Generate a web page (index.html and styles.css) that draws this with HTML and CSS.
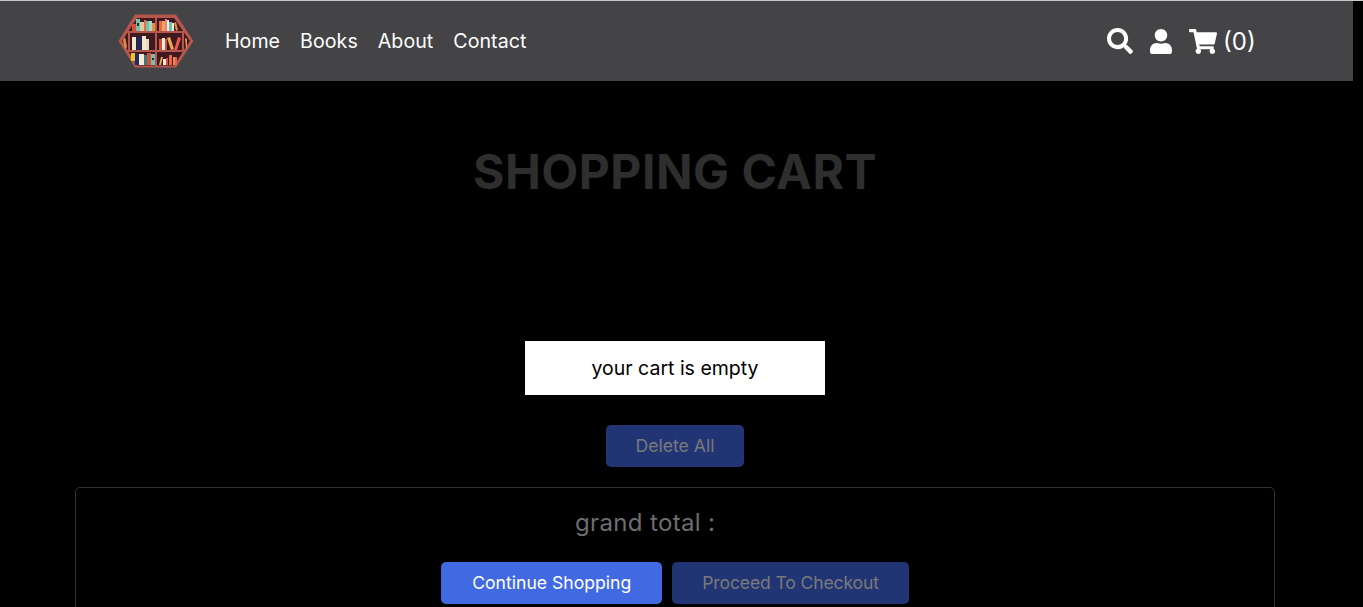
FILE: index.html
```html
<!DOCTYPE html>
<html lang="en">
<head>
<meta charset="utf-8">
<title>Shopping Cart</title>
<link rel="stylesheet" href="styles.css">
</head>
<body>
<div class="page">
  <header class="header">
    <a class="logo" href="#" aria-label="Bookshelf logo">
      <svg viewBox="0 0 76 54" width="76" height="54">
        <polygon fill="#b5574c" points="17,0.5 58,0.5 75.500,27 58,53.500 17,53.500 0.500,27"/>
        <polygon fill="#3e1a20" points="19,4 56,4 72,27 56,51.500 19,51.500 4,27"/>
        <!-- top-left shelf -->
        <rect x="14" y="10" width="4" height="7" fill="#d8503c"/>
        <rect x="18" y="5" width="4" height="12" fill="#6fc2ac"/>
        <rect x="19" y="9" width="2" height="3" fill="#2a2a2a"/>
        <rect x="22" y="8" width="4" height="9" fill="#e0c8a0"/>
        <rect x="26" y="6" width="2" height="11" fill="#e8694a"/>
        <rect x="28" y="7" width="3" height="10" fill="#6fc2ac"/>
        <rect x="31" y="7" width="3" height="10" fill="#a8d8c4"/>
        <rect x="34" y="9" width="3" height="8" fill="#e8913c"/>
        <!-- top-right shelf -->
        <rect x="41" y="7" width="3" height="10" fill="#e8694a"/>
        <rect x="44" y="7" width="3" height="10" fill="#f0a84c"/>
        <rect x="47" y="5" width="2" height="12" fill="#e0808c"/>
        <rect x="49" y="6" width="2" height="11" fill="#f4ece0"/>
        <rect x="51" y="8" width="3" height="9" fill="#6fc2ac"/>
        <rect x="54" y="9" width="2" height="8" fill="#f4ece0"/>
        <polygon fill="#e8913c" points="56,9 58,8 60,16 58,17"/>
        <!-- middle shelf -->
        <polygon fill="#e8913c" points="5,26 7,23 9,33 7,35"/>
        <rect x="14" y="23" width="4" height="13" fill="#f0e6d0"/>
        <rect x="19" y="23" width="4" height="13" fill="#1e2a66"/>
        <rect x="24" y="22" width="4" height="14" fill="#f0e6d0"/>
        <rect x="28" y="25" width="3" height="11" fill="#e8dcc0"/>
        <rect x="41" y="25" width="3" height="11" fill="#d8503c"/>
        <rect x="44" y="24" width="3" height="12" fill="#f4ece0"/>
        <rect x="47" y="25" width="2" height="11" fill="#d8503c"/>
        <polygon fill="#f0a84c" points="49,24 52,23 56,35 53,36"/>
        <polygon fill="#e85a4a" points="60,23 63,24 59,36 56,36"/>
        <polygon fill="#e8913c" points="67,24 69,25 69,33 68,35"/>
        <!-- bottom shelf -->
        <rect x="13" y="39" width="4" height="8" fill="#f0c030"/>
        <rect x="17" y="40" width="4" height="11" fill="#1e2a66"/>
        <rect x="21" y="40" width="5" height="11" fill="#f4ecd8"/>
        <rect x="26" y="41" width="3" height="10" fill="#3c7a80"/>
        <rect x="29" y="39" width="4" height="12" fill="#d8503c"/>
        <rect x="33" y="40" width="4" height="11" fill="#6fc2ac"/>
        <rect x="34" y="44" width="2" height="2" fill="#2a2a2a"/>
        <polygon fill="#f0a84c" points="43,43 45,43 43,51 41,51"/>
        <rect x="45" y="45" width="3" height="6" fill="#f4ece0"/>
        <rect x="48" y="44" width="2" height="7" fill="#d8503c"/>
        <rect x="51" y="41" width="3" height="10" fill="#e8694a"/>
        <rect x="55" y="43" width="2" height="8" fill="#e8913c"/>
        <rect x="57" y="43" width="2" height="8" fill="#e85a4a"/>
        <!-- shelves and dividers -->
        <rect x="8" y="17" width="60" height="2" fill="#b5574c"/>
        <rect x="8" y="36" width="60" height="2" fill="#b5574c"/>
        <rect x="37" y="4" width="2" height="48" fill="#b5574c"/>
        <rect x="10" y="18" width="2" height="19" fill="#b5574c"/>
        <rect x="64" y="18" width="2" height="19" fill="#b5574c"/>
      </svg>
    </a>
    <nav class="nav">
      <a href="#">Home</a>
      <a href="#">Books</a>
      <a href="#">About</a>
      <a href="#">Contact</a>
    </nav>
    <div class="icons">
      <svg class="ic" viewBox="0 0 512 512" width="26" height="26"><path d="M505 442.700L405.300 343c-4.500-4.500-10.600-7-17-7H372c27.600-35.300 44-79.700 44-128C416 93.100 322.900 0 208 0S0 93.100 0 208s93.100 208 208 208c48.300 0 92.700-16.400 128-44v16.300c0 6.400 2.500 12.500 7 17l99.700 99.700c9.400 9.400 24.600 9.400 33.900 0l28.300-28.300c9.400-9.400 9.400-24.600.1-34zM208 336c-70.700 0-128-57.200-128-128 0-70.700 57.200-128 128-128 70.700 0 128 57.200 128 128 0 70.700-57.200 128-128 128z"/></svg>
      <svg class="ic" viewBox="0 0 448 512" width="22" height="25"><path d="M224 256c70.700 0 128-57.300 128-128S294.700 0 224 0 96 57.300 96 128s57.300 128 128 128zm89.600 32h-16.700c-22.200 10.200-46.900 16-72.900 16s-50.600-5.800-72.900-16h-16.700C60.200 288 0 348.200 0 422.400V464c0 26.500 21.500 48 48 48h352c26.500 0 48-21.500 48-48v-41.600c0-74.200-60.200-134.400-134.400-134.400z"/></svg>
      <span class="cart"><svg class="ic" viewBox="0 0 576 512" width="28" height="25"><path d="M528.120 301.319l47.273-208C578.806 78.301 567.391 64 551.990 64H159.208l-9.166-44.810C147.758 8.021 137.930 0 126.529 0H24C10.745 0 0 10.745 0 24v16c0 13.255 10.745 24 24 24h69.883l70.248 343.435C147.325 417.100 136 435.222 136 456c0 30.928 25.072 56 56 56s56-25.072 56-56c0-15.674-6.447-29.835-16.824-40h209.647C430.447 426.165 424 440.326 424 456c0 30.928 25.072 56 56 56s56-25.072 56-56c0-22.172-12.888-41.332-31.579-50.405l5.517-24.276c3.413-15.018-8.002-29.319-23.403-29.319H218.117l-6.545-32h293.145c11.206 0 20.920-7.754 23.403-18.681z"/></svg><span class="count">(0)</span></span>
    </div>
  </header>
  <main class="main">
    <h1 class="title">SHOPPING CART</h1>
    <p class="empty">your cart is empty</p>
    <a class="btn dim del" href="#">Delete All</a>
    <section class="total">
      <p class="grand">grand total :</p>
      <div class="actions">
        <a class="btn continue" href="#">Continue Shopping</a>
        <a class="btn dim checkout" href="#">Proceed To Checkout</a>
      </div>
    </section>
  </main>
</div>
</body>
</html>
```
FILE: styles.css
```css
* { box-sizing: border-box; }
html, body { margin: 0; height: 100%; overflow: hidden; }
body { background: #000; border-top: 1px solid #c8c8c8; font-family: Inter, Roboto, sans-serif; color: #fff; }
a { text-decoration: none; color: inherit; }
.page { width: 1353px; }
.header { height: 80px; background: #444345; display: flex; align-items: center; padding: 0 100px 0 118px; }
.logo { display: flex; margin-top: -1px; }
.nav { display: flex; gap: 20px; margin-left: 31px; font-size: 19.600px; letter-spacing: 0.050px; }
.icons { margin-left: auto; display: flex; align-items: center; gap: 17px; }
.ic { fill: #fff; display: block; }
.cart { display: flex; align-items: center; gap: 6px; font-size: 24px; }
.count { width: 30px; }
.main { width: 1200px; margin: 0 0 0 75px; display: flex; flex-direction: column; align-items: center; }
.title { margin: 62px 0 0; font-size: 48px; line-height: 58px; font-weight: 700; letter-spacing: 0.500px; color: #2e2e2e; }
.empty { margin: 140px 0 0; width: 300px; height: 54px; background: #fff; color: #000; font-size: 19.500px; display: flex; align-items: center; justify-content: center; }
.btn { display: block; padding: 0 30px; height: 42px; line-height: 42px; border-radius: 5px; background: #4169e1; color: #fff; font-size: 17.600px; }
.btn.dim { background: #213575; color: #7a7a7a; }
.continue { padding: 0 31px; }
.checkout { letter-spacing: -0.150px; }
.del { margin-top: 30px; }
.total { width: 100%; margin-top: 20px; height: 200px; border: 1px solid #333; border-radius: 5px; display: flex; flex-direction: column; align-items: center; }
.grand { margin: 19px 0 0; font-size: 24px; line-height: 32px; letter-spacing: 0.350px; color: #6e6e6e; width: 200px; }
.actions { display: flex; gap: 10px; margin-top: 23px; }
```
